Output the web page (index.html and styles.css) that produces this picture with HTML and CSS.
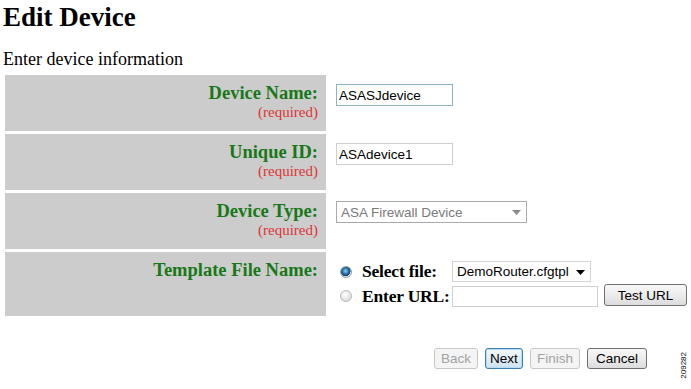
FILE: index.html
```html
<!DOCTYPE html>
<html lang="en">
<head>
<meta charset="utf-8">
<title>Edit Device</title>
<link rel="stylesheet" href="styles.css">
</head>
<body>
<div class="page">
  <h1 class="title">Edit Device</h1>
  <p class="intro">Enter device information</p>

  <div class="form">
    <div class="label-cell">
      <div class="label">Device Name:</div>
      <div class="req">(required)</div>
    </div>
    <div class="field-cell">
      <input class="text text-focus w-name" type="text" value="ASASJdevice">
    </div>

    <div class="label-cell">
      <div class="label">Unique ID:</div>
      <div class="req">(required)</div>
    </div>
    <div class="field-cell">
      <input class="text w-name" type="text" value="ASAdevice1">
    </div>

    <div class="label-cell">
      <div class="label">Device Type:</div>
      <div class="req">(required)</div>
    </div>
    <div class="field-cell">
      <div class="select select-type">
        <span class="select-text">ASA Firewall Device</span>
        <svg class="arrow" width="9" height="5" viewBox="0 0 9 5"><path d="M0 0H9L4.5 5Z" fill="#8a8a8a"/></svg>
      </div>
    </div>

    <div class="label-cell">
      <div class="label">Template File Name:</div>
    </div>
    <div class="field-cell">
      <div class="choices">
        <span class="radio radio-on"></span>
        <span class="choice-label">Select file:</span>
        <div class="select select-file">
          <span class="select-text">DemoRouter.cfgtpl</span>
          <svg class="arrow" width="9" height="5" viewBox="0 0 9 5"><path d="M0 0H9L4.5 5Z" fill="#000"/></svg>
        </div>

        <span class="radio"></span>
        <span class="choice-label">Enter URL:</span>
        <div class="url-line">
          <input class="text w-url" type="text" value="">
          <button class="btn btn-normal btn-test" type="button">Test URL</button>
        </div>
      </div>
    </div>
  </div>

  <div class="actions">
    <button class="btn btn-disabled btn-back" type="button">Back</button>
    <button class="btn btn-default btn-next" type="button">Next</button>
    <button class="btn btn-disabled btn-finish" type="button">Finish</button>
    <button class="btn btn-normal btn-cancel" type="button">Cancel</button>
  </div>
</div>
<span class="figid">209282</span>
</body>
</html>
```

FILE: styles.css
```css
html, body {
  margin: 0;
  padding: 0;
  background: #ffffff;
  overflow: hidden;
}

.page {
  padding: 2px 0 0 3px;
  font-family: "Liberation Serif", "Times New Roman", serif;
  color: #000;
}

.title {
  margin: 0;
  font-size: 27px;
  line-height: 31px;
  font-weight: bold;
}

.intro {
  margin: 16px 0 5px 0;
  font-size: 18px;
  line-height: 21px;
}

.form {
  display: grid;
  grid-template-columns: 321px 1fr;
  column-gap: 3px;
  row-gap: 3px;
  margin-left: 2px;
}

.label-cell {
  background: #cccccc;
  padding: 8px 8px 10px 0;
  text-align: right;
}

.label {
  font-size: 18.5px;
  line-height: 21px;
  font-weight: bold;
  color: #187818;
  white-space: nowrap;
}

.req {
  font-size: 15px;
  line-height: 17px;
  color: #dd3434;
}

.field-cell {
  padding: 9px 0 9px 7px;
  font-family: "Liberation Sans", Arial, sans-serif;
}

.text {
  display: block;
  box-sizing: border-box;
  height: 22px;
  margin: 0;
  padding: 0 2px;
  border: 1px solid #cfcfcf;
  font-family: "Liberation Sans", Arial, sans-serif;
  font-size: 13.5px;
  color: #000;
  background: #fff;
  outline: none;
}

.text-focus {
  border-color: #8fb2c6;
}

.w-name {
  width: 117px;
}

.select {
  position: relative;
  box-sizing: border-box;
  display: flex;
  align-items: center;
  border: 1px solid #cccccc;
  background: #fff;
  font-size: 13.5px;
  padding-left: 4px;
  white-space: nowrap;
}

.select-type {
  width: 191px;
  height: 22px;
  margin-top: -1px;
  border-color: #a9a9a9;
  color: #7a7a7a;
}

.select-file {
  width: 139px;
  height: 21px;
  color: #000;
  border-color: #d4d4d4;
}

.arrow {
  position: absolute;
  right: 5px;
  top: 50%;
  margin-top: -2px;
}

.choices {
  display: grid;
  grid-template-columns: 26px 90px auto;
  grid-template-rows: 21px 22px;
  row-gap: 3px;
  align-items: center;
  justify-items: start;
}

.radio {
  box-sizing: border-box;
  width: 12px;
  height: 12px;
  margin-left: 4px;
  border-radius: 50%;
  border: 1px solid #b8b8b8;
  background: radial-gradient(circle at 40% 35%, #ffffff 0%, #e6e6e6 55%, #cfcfcf 100%);
}

.radio-on {
  border-color: #9aa3ab;
  background: radial-gradient(circle at 45% 40%, #8fd0f5 0%, #2a79b4 35%, #123f66 60%, #dfe5ea 64%, #c9d0d6 100%);
}

.choice-label {
  font-family: "Liberation Serif", "Times New Roman", serif;
  font-size: 17.5px;
  line-height: 21px;
  font-weight: bold;
  letter-spacing: -0.2px;
  color: #000;
  white-space: nowrap;
}

.url-line {
  display: flex;
  align-items: flex-end;
  height: 22px;
}

.w-url {
  width: 146px;
  height: 21px;
}

.btn {
  box-sizing: border-box;
  height: 21px;
  margin: 0;
  padding: 0;
  font-family: "Liberation Sans", Arial, sans-serif;
  font-size: 13.5px;
  font-weight: normal;
  line-height: 19px;
  text-align: center;
  border-radius: 3px;
  cursor: default;
  white-space: nowrap;
}

.btn-normal {
  border: 1px solid #707070;
  background: linear-gradient(#f8f8f8 0%, #ececec 50%, #dcdcdc 100%);
  color: #000;
}

.btn-default {
  border: 1px solid #3c7fb1;
  background: linear-gradient(#f3f9fd 0%, #e2eef8 50%, #cde2f2 100%);
  box-shadow: inset 0 0 0 1px #b7dcf3;
  color: #000;
}

.btn-disabled {
  border: 1px solid #c8c8c8;
  background: #f4f4f4;
  color: #a2a2a2;
}

.btn-test {
  width: 83px;
  height: 22px;
  margin-left: 6px;
  align-self: flex-start;
  margin-top: -1px;
}

.actions {
  display: flex;
  justify-content: flex-end;
  gap: 7px;
  margin-top: 32px;
  padding-right: 44px;
}

.btn-back { width: 44px; }
.btn-next { width: 38px; }
.btn-finish { width: 50px; }
.btn-cancel { width: 60px; }

.figid {
  position: absolute;
  left: 681px;
  top: 352px;
  writing-mode: vertical-rl;
  transform: rotate(180deg);
  font-family: "Liberation Sans Narrow", "Liberation Sans", Arial, sans-serif;
  font-size: 8px;
  line-height: 6px;
  color: #000;
}
```
